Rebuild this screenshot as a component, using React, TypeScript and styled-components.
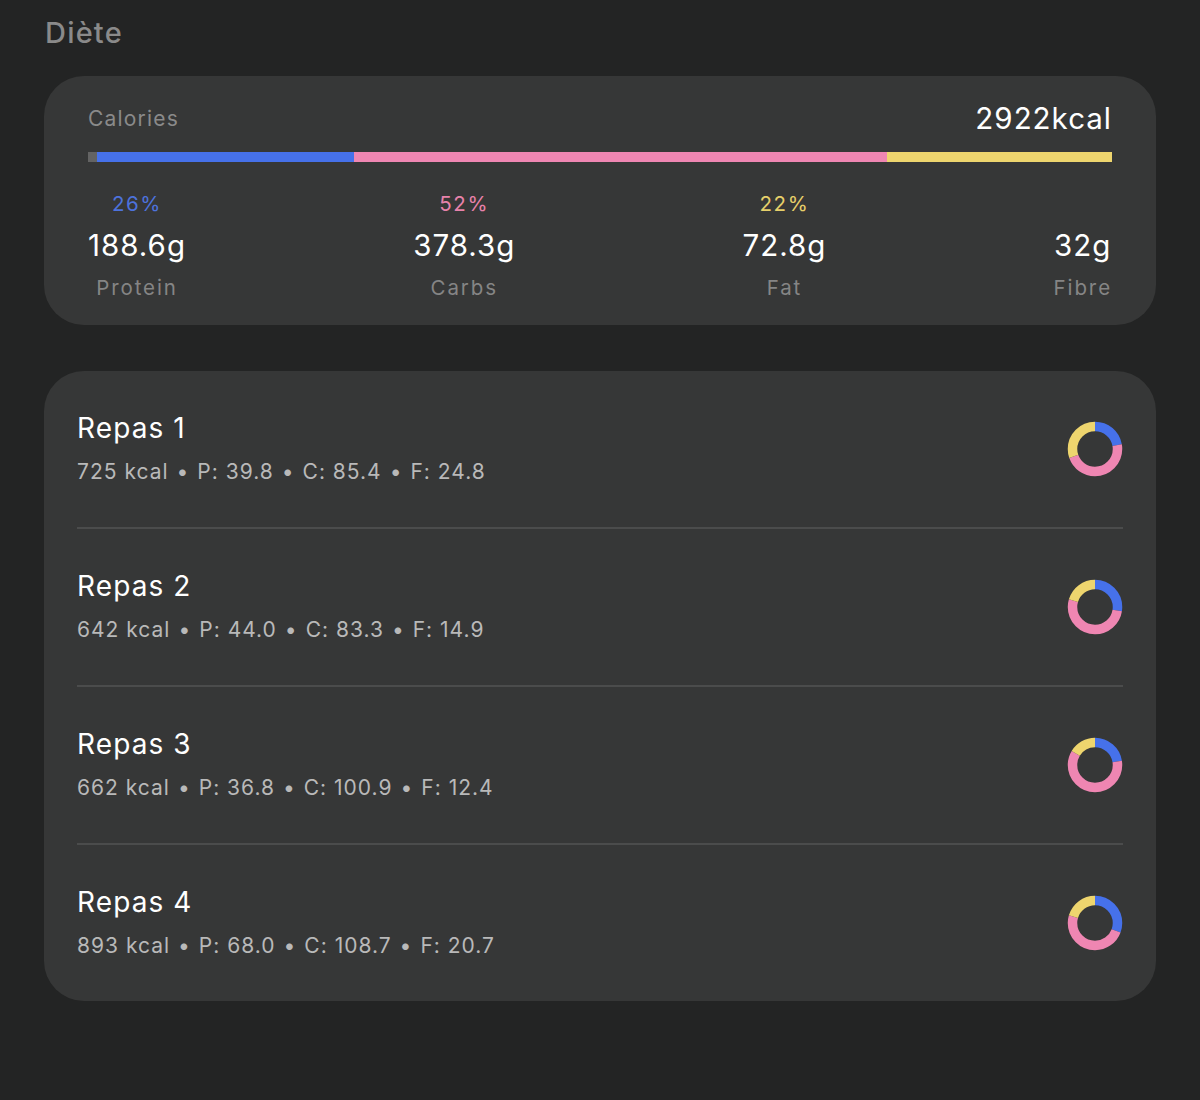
import React from "react";
import styled, { createGlobalStyle } from "styled-components";

const GlobalStyle = createGlobalStyle`
  html, body { margin: 0; padding: 0; background: #232424; }
  body { font-family: Inter, "Noto Sans", "Liberation Sans", sans-serif; -webkit-font-smoothing: antialiased; }
  #root { min-height: 1100px; background: #232424; }
`;

const C = {
  blue: "#4671ea",
  pink: "#ef86b2",
  yellow: "#eed56e",
  blueText: "#4d72dc",
  pinkText: "#e882ab",
  yellowText: "#e6cf6a",
};

const Page = styled.div`
  padding: 16px 44px 40px 44px;
  display: flex;
  flex-direction: column;
`;

const PageTitle = styled.h1`
  margin: 0 0 26px 1px;
  font-size: 29px;
  line-height: 34px;
  font-weight: 500;
  color: #8a8a8a;
  letter-spacing: 1.2px;
`;

const Card = styled.section<{ $pad: string }>`
  background: #363737;
  border-radius: 40px;
  padding: ${(p) => p.$pad};
`;

const Header = styled.div`
  display: flex;
  align-items: center;
  justify-content: space-between;
  height: 34px;
  margin-top: 1px;
`;

const HeaderLabel = styled.span`
  font-size: 21px;
  color: #8a8a8a;
  letter-spacing: 1.2px;
`;

const HeaderValue = styled.span`
  font-size: 29.5px;
  color: #ffffff;
  letter-spacing: 1px;
`;

const Bar = styled.div`
  margin-top: 17px;
  height: 10px;
  display: flex;
  background: #636363;
`;

const Segment = styled.div<{ $color: string }>`
  background: ${(p) => p.$color};
  height: 100%;
`;

const Macros = styled.div`
  display: flex;
  justify-content: space-between;
  margin-top: 30px;
`;

const Macro = styled.div`
  display: flex;
  flex-direction: column;
  align-items: center;
`;

const Pct = styled.span<{ $color: string }>`
  height: 24px;
  line-height: 24px;
  font-size: 20.5px;
  color: ${(p) => p.$color};
  letter-spacing: 1.6px;
`;

const MacroValue = styled.span`
  margin-top: 12px;
  font-size: 29.5px;
  line-height: 34px;
  color: #ffffff;
  letter-spacing: 1px;
`;

const MacroLabel = styled.span`
  margin-top: 13px;
  font-size: 20.5px;
  line-height: 26px;
  color: #858585;
  letter-spacing: 1.9px;
`;

const MealsCard = styled(Card)`
  margin-top: 46px;
  display: flex;
  flex-direction: column;
`;

const Row = styled.div`
  height: 156px;
  padding: 0 33px;
  display: flex;
  align-items: center;
  justify-content: space-between;
`;

const Divider = styled.div`
  height: 2px;
  margin: 0 33px;
  background: #4b4c4c;
`;

const MealText = styled.div`
  display: flex;
  flex-direction: column;
  margin-top: -1px;
`;

const MealTitle = styled.span`
  font-size: 28px;
  line-height: 34px;
  color: #ffffff;
  letter-spacing: 1.1px;
`;

const MealSub = styled.span`
  margin-top: 12px;
  font-size: 21px;
  line-height: 30px;
  color: #b9b9b9;
  letter-spacing: 1px;
`;

const Dot = styled.span`
  margin: 0 8px;
`;

function Donut({ p, c, f }: { p: number; c: number; f: number }) {
  const pk = p * 4, ck = c * 4, fk = f * 9;
  const total = pk + ck + fk;
  const r = 22.5;
  const circ = 2 * Math.PI * r;
  const segs = [
    { v: pk / total, color: C.blue },
    { v: ck / total, color: C.pink },
    { v: fk / total, color: C.yellow },
  ];
  let acc = 0;
  return (
    <svg width="56" height="56" viewBox="0 0 56 56">
      <g transform="rotate(-90 28 28)">
        {segs.map((s, i) => {
          const len = s.v * circ;
          const el = (
            <circle
              key={i}
              cx="28"
              cy="28"
              r={r}
              fill="none"
              stroke={s.color}
              strokeWidth="9.5"
              strokeDasharray={`${len} ${circ - len}`}
              strokeDashoffset={-acc}
            />
          );
          acc += len;
          return el;
        })}
      </g>
    </svg>
  );
}

const meals = [
  { name: "Repas 1", kcal: 725, p: "39.8", c: "85.4", f: "24.8" },
  { name: "Repas 2", kcal: 642, p: "44.0", c: "83.3", f: "14.9" },
  { name: "Repas 3", kcal: 662, p: "36.8", c: "100.9", f: "12.4" },
  { name: "Repas 4", kcal: 893, p: "68.0", c: "108.7", f: "20.7" },
];

export default function App() {
  return (
    <>
      <GlobalStyle />
      <Page>
        <PageTitle>Diète</PageTitle>
        <Card $pad="24px 44px 24px 44px">
          <Header>
            <HeaderLabel>Calories</HeaderLabel>
            <HeaderValue>2922kcal</HeaderValue>
          </Header>
          <Bar>
            <Segment $color="#636363" style={{ width: 9 }} />
            <Segment $color={C.blue} style={{ width: 257 }} />
            <Segment $color={C.pink} style={{ width: 533 }} />
            <Segment $color={C.yellow} style={{ flex: 1 }} />
          </Bar>
          <Macros>
            <Macro>
              <Pct $color={C.blueText}>26%</Pct>
              <MacroValue>188.6g</MacroValue>
              <MacroLabel>Protein</MacroLabel>
            </Macro>
            <Macro>
              <Pct $color={C.pinkText}>52%</Pct>
              <MacroValue>378.3g</MacroValue>
              <MacroLabel>Carbs</MacroLabel>
            </Macro>
            <Macro>
              <Pct $color={C.yellowText}>22%</Pct>
              <MacroValue>72.8g</MacroValue>
              <MacroLabel>Fat</MacroLabel>
            </Macro>
            <Macro>
              <Pct $color="transparent"> </Pct>
              <MacroValue>32g</MacroValue>
              <MacroLabel>Fibre</MacroLabel>
            </Macro>
          </Macros>
        </Card>
        <MealsCard $pad="0">
          {meals.map((m, i) => (
            <React.Fragment key={m.name}>
              {i > 0 && <Divider />}
              <Row>
                <MealText>
                  <MealTitle>{m.name}</MealTitle>
                  <MealSub>
                    {m.kcal} kcal<Dot>•</Dot>P: {m.p}<Dot>•</Dot>C: {m.c}<Dot>•</Dot>F: {m.f}
                  </MealSub>
                </MealText>
                <Donut p={parseFloat(m.p)} c={parseFloat(m.c)} f={parseFloat(m.f)} />
              </Row>
            </React.Fragment>
          ))}
        </MealsCard>
      </Page>
    </>
  );
}
